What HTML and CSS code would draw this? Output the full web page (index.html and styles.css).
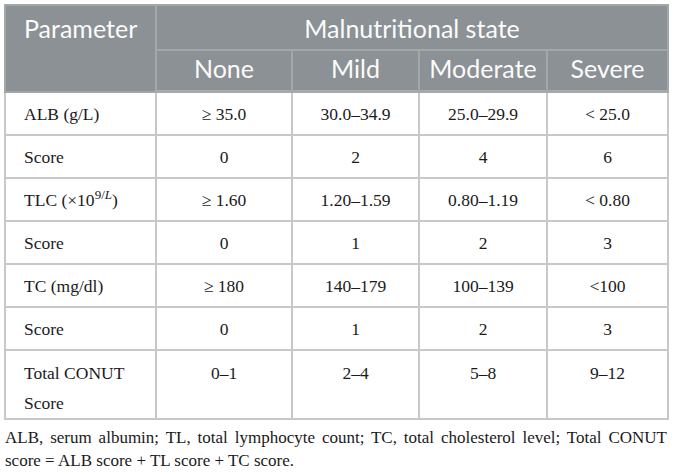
FILE: index.html
```html
<!DOCTYPE html>
<html lang="en">
<head>
<meta charset="utf-8">
<title>CONUT score</title>
<link rel="stylesheet" href="styles.css">
</head>
<body>
<div class="page">
  <table class="conut">
    <colgroup>
      <col class="c1"><col class="c2"><col class="c3"><col class="c4"><col class="c5">
    </colgroup>
    <thead>
      <tr>
        <th class="param" rowspan="2">Parameter</th>
        <th class="group" colspan="4">Malnutritional state</th>
      </tr>
      <tr class="sub">
        <th>None</th>
        <th>Mild</th>
        <th>Moderate</th>
        <th>Severe</th>
      </tr>
    </thead>
    <tbody>
      <tr><td>ALB (g/L)</td><td>≥ 35.0</td><td>30.0–34.9</td><td>25.0–29.9</td><td>&lt; 25.0</td></tr>
      <tr><td>Score</td><td>0</td><td>2</td><td>4</td><td>6</td></tr>
      <tr><td>TLC (×10<sup>9/<i>L</i></sup>)</td><td>≥ 1.60</td><td>1.20–1.59</td><td>0.80–1.19</td><td>&lt; 0.80</td></tr>
      <tr><td>Score</td><td>0</td><td>1</td><td>2</td><td>3</td></tr>
      <tr><td>TC (mg/dl)</td><td>≥ 180</td><td>140–179</td><td>100–139</td><td>&lt;100</td></tr>
      <tr><td>Score</td><td>0</td><td>1</td><td>2</td><td>3</td></tr>
      <tr class="total"><td>Total CONUT Score</td><td>0–1</td><td>2–4</td><td>5–8</td><td>9–12</td></tr>
    </tbody>
  </table>
  <p class="note">ALB, serum albumin; TL, total lymphocyte count; TC, total cholesterol level; Total CONUT score = ALB score + TL score + TC score.</p>
</div>
</body>
</html>
```
FILE: styles.css
```css
html, body {
  margin: 0;
  padding: 0;
  background: #ffffff;
}

.page {
  padding: 4px 0 0 4px;
  width: 663px;
}

.conut {
  width: 663px;
  border-collapse: collapse;
  table-layout: fixed;
  border: 1px solid #c4c6c6;
}

.c1 { width: 151px; }
.c2 { width: 136px; }
.c3 { width: 127px; }
.c4 { width: 128px; }
.c5 { width: 121px; }

.conut th {
  background: #8b9194;
  color: #fbfbfb;
  font-family: Lato, "Open Sans", sans-serif;
  font-weight: 400;
  font-size: 25px;
  text-align: center;
  border: 2px solid #a2a7a9;
  padding: 0 2px;
}

.conut th.param {
  text-align: left;
  vertical-align: top;
  line-height: 42px;
  padding: 1px 10px 0 18px;
}

.conut th.group {
  line-height: 42px;
  padding-top: 1px;
  padding-bottom: 0;
}

.conut tr.sub th {
  line-height: 35px;
  padding-top: 0;
  padding-bottom: 4px;
  border-bottom: 3px solid #a6aaac;
}

.conut td {
  font-family: "Liberation Serif", "Times New Roman", serif;
  font-size: 17.5px;
  color: #1a1a1a;
  line-height: 28px;
  padding: 7px 4px 6px;
  text-align: center;
  vertical-align: top;
  border: 2px solid #c8c8c8;
}

.conut td:first-child {
  text-align: left;
  padding-left: 18px;
  padding-right: 10px;
}

.conut tr.total td {
  padding-top: 7px;
  padding-bottom: 0;
  line-height: 30px;
}

.conut sup {
  font-size: 13px;
  line-height: 0;
  vertical-align: 7px;
}

.note {
  margin: 6px 0 0 1px;
  font-family: "Liberation Serif", "Times New Roman", serif;
  font-size: 17px;
  line-height: 23px;
  color: #1a1a1a;
  text-align: justify;
}
```
